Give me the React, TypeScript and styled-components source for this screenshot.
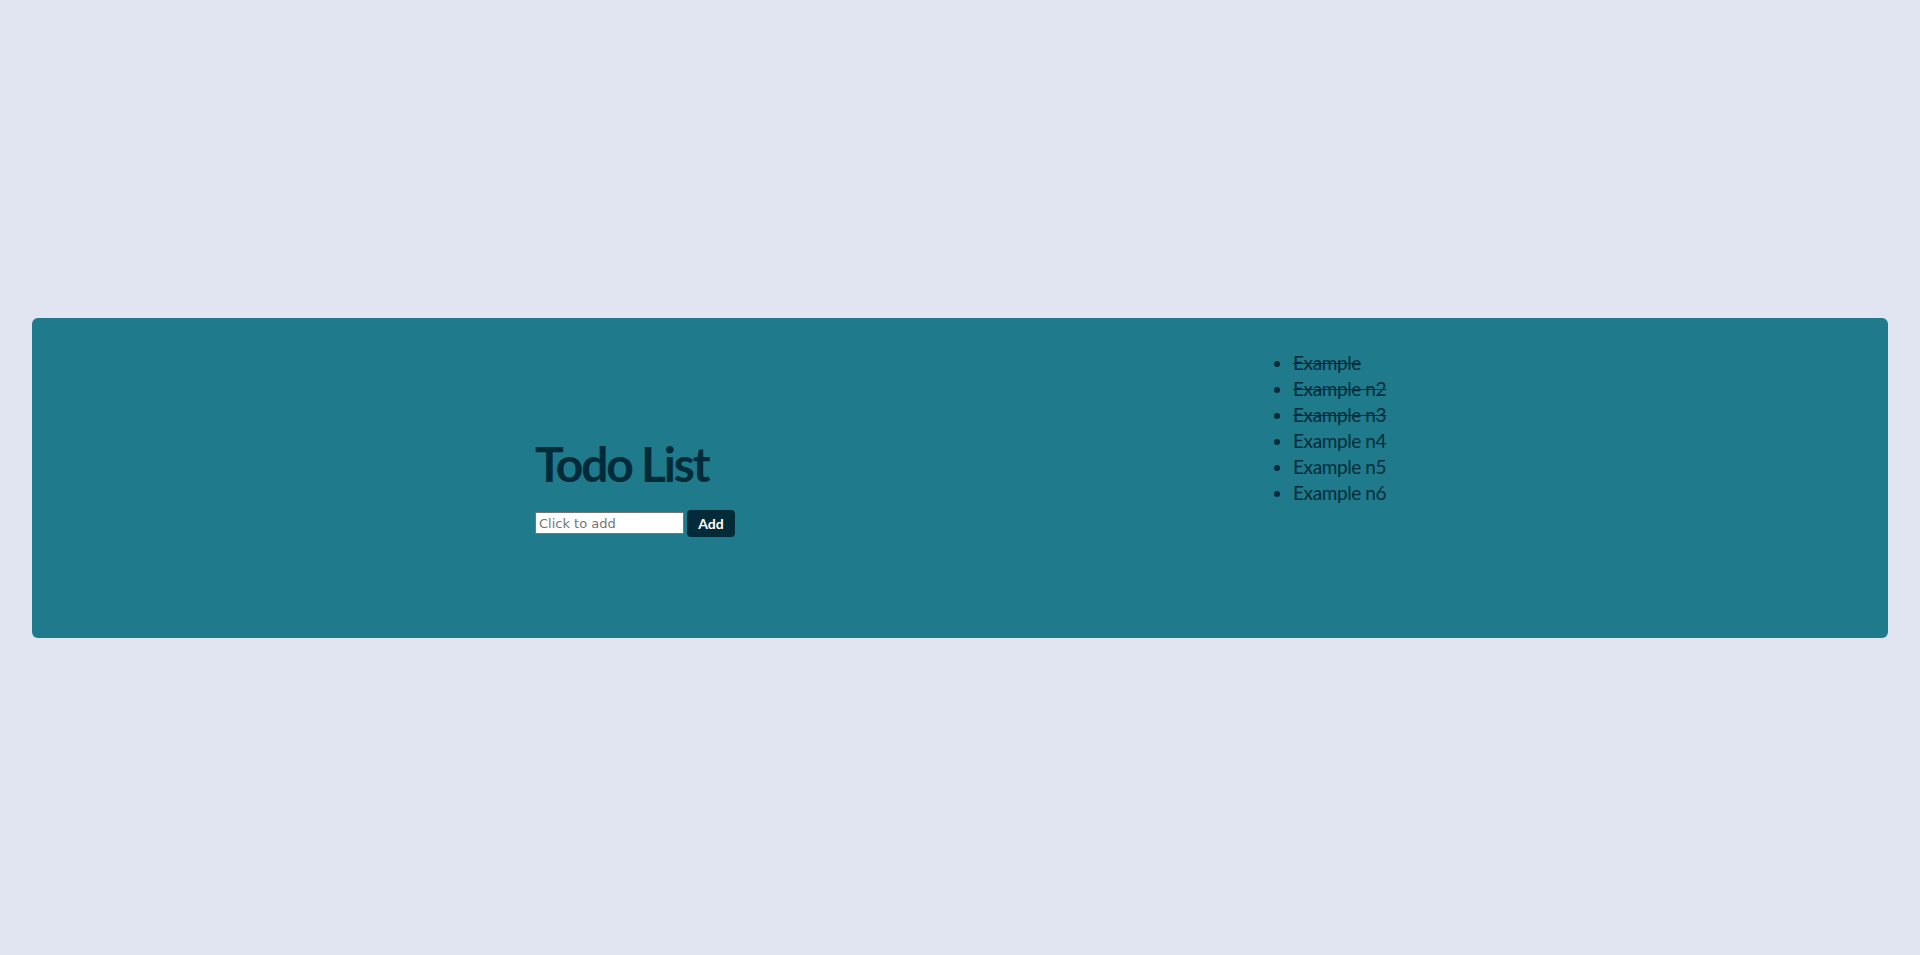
import React from "react";
import styled, { createGlobalStyle } from "styled-components";

const GlobalStyle = createGlobalStyle`
  html, body {
    margin: 0;
    padding: 0;
    background: #e1e5f2;
  }
  body {
    font-family: Lato, "Noto Sans", sans-serif;
    color: #022b3a;
  }
`;

const Page = styled.div`
  min-height: 100vh;
  display: flex;
  align-items: center;
  padding: 0 32px;
  box-sizing: border-box;
`;

const Panel = styled.main`
  flex: 1;
  height: 320px;
  background: #1f7a8c;
  border-radius: 6px;
  display: flex;
  justify-content: space-evenly;
  align-items: flex-start;
  padding-top: 32px;
  box-sizing: border-box;
`;

const Editor = styled.section`
  width: 215px;
  margin-top: 90px;
  display: flex;
  flex-direction: column;
  gap: 22px;
`;

const Title = styled.h1`
  margin: 0;
  font-family: Lato, sans-serif;
  font-weight: 700;
  font-size: 48px;
  line-height: 1;
  letter-spacing: -2.2px;
  color: #022b3a;
  white-space: nowrap;
`;

const Form = styled.form`
  display: flex;
  align-items: center;
  gap: 3px;
`;

const Input = styled.input`
  width: 149px;
  height: 22px;
  box-sizing: border-box;
  border: 1px solid #767676;
  border-radius: 0;
  padding: 1px 3px;
  font-family: "DejaVu Sans", sans-serif;
  font-size: 13px;
  background: #ffffff;
  color: #022b3a;
  &::placeholder {
    color: #757575;
  }
`;

const AddButton = styled.button`
  width: 48px;
  height: 27px;
  border: none;
  border-radius: 4px;
  background: #022b3a;
  color: #ffffff;
  font-family: Lato, sans-serif;
  font-weight: 700;
  font-size: 14px;
  padding: 0;
  cursor: pointer;
`;

const List = styled.ul`
  width: 132px;
  margin: 0;
  padding: 0 0 0 40px;
  box-sizing: border-box;
  font-size: 19px;
  line-height: 26px;
  letter-spacing: -0.4px;
  list-style: disc;
  color: #022b3a;
`;

const Item = styled.li<{ $done?: boolean }>`
  white-space: nowrap;
  text-decoration: ${(p) => (p.$done ? "line-through" : "none")};
`;

const todos = [
  { text: "Example", done: true },
  { text: "Example n2", done: true },
  { text: "Example n3", done: true },
  { text: "Example n4", done: false },
  { text: "Example n5", done: false },
  { text: "Example n6", done: false },
];

export default function App() {
  return (
    <>
      <GlobalStyle />
      <Page>
        <Panel>
          <Editor>
            <Title>Todo List</Title>
            <Form onSubmit={(e) => e.preventDefault()}>
              <Input placeholder="Click to add" />
              <AddButton type="submit">Add</AddButton>
            </Form>
          </Editor>
          <List>
            {todos.map((t) => (
              <Item key={t.text} $done={t.done}>
                {t.text}
              </Item>
            ))}
          </List>
        </Panel>
      </Page>
    </>
  );
}
